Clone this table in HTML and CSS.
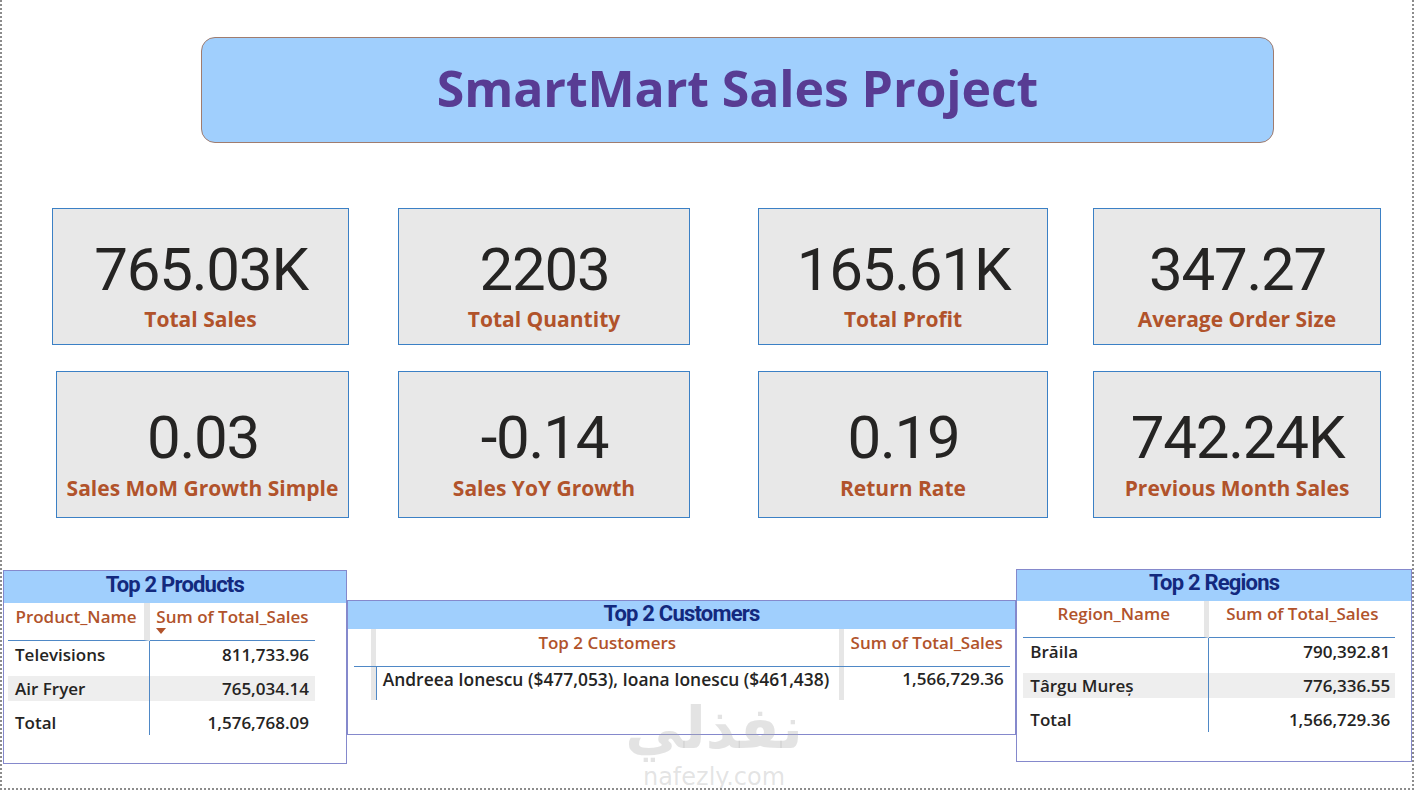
FILE: index.html
```
<!DOCTYPE html>
<html lang="en">
<head>
<meta charset="utf-8">
<title>SmartMart Sales Project</title>
<link rel="stylesheet" href="styles.css">
</head>
<body>
<div class="canvas">
  <header class="title-box">
    <h1 class="title">SmartMart Sales Project</h1>
  </header>

  <section class="kpis">
    <div class="kpi-row kpi-row--first">
      <div class="kpi kpi--a"><div class="kpi-value">765.03K</div><div class="kpi-label">Total Sales</div></div>
      <div class="kpi kpi--b"><div class="kpi-value">2203</div><div class="kpi-label">Total Quantity</div></div>
      <div class="kpi kpi--c"><div class="kpi-value">165.61K</div><div class="kpi-label">Total Profit</div></div>
      <div class="kpi kpi--d"><div class="kpi-value">347.27</div><div class="kpi-label">Average Order Size</div></div>
    </div>
    <div class="kpi-row kpi-row--second">
      <div class="kpi kpi--a"><div class="kpi-value">0.03</div><div class="kpi-label">Sales MoM Growth Simple</div></div>
      <div class="kpi kpi--b"><div class="kpi-value">-0.14</div><div class="kpi-label">Sales YoY Growth</div></div>
      <div class="kpi kpi--c"><div class="kpi-value">0.19</div><div class="kpi-label">Return Rate</div></div>
      <div class="kpi kpi--d"><div class="kpi-value">742.24K</div><div class="kpi-label">Previous Month Sales</div></div>
    </div>
  </section>

  <section class="tables">
    <div class="tbl tbl--products">
      <div class="tbl-title">Top 2 Products</div>
      <div class="grid2 grid2--products">
        <div class="th th--first">Product_Name</div>
        <div class="th th--sort">Sum of Total_Sales<span class="sort-arrow"></span></div>
        <div class="td td--first">Televisions</div>
        <div class="td td--num">811,733.96</div>
        <div class="td td--first td--alt">Air Fryer</div>
        <div class="td td--num td--alt">765,034.14</div>
        <div class="td td--first">Total</div>
        <div class="td td--num">1,576,768.09</div>
      </div>
    </div>

    <div class="tbl tbl--customers">
      <div class="tbl-title">Top 2 Customers</div>
      <div class="cust-grid">
        <div class="ch ch--empty"></div>
        <div class="ch ch--sep"></div>
        <div class="ch ch--center">Top 2 Customers</div>
        <div class="ch ch--sep"></div>
        <div class="ch ch--center">Sum of Total_Sales</div>
        <div class="cd cd--empty"></div>
        <div class="cd cd--sep"></div>
        <div class="cd cd--text">Andreea Ionescu ($477,053), Ioana Ionescu ($461,438)</div>
        <div class="cd cd--sep"></div>
        <div class="cd cd--num">1,566,729.36</div>
      </div>
    </div>

    <div class="tbl tbl--regions">
      <div class="tbl-title">Top 2 Regions</div>
      <div class="grid2 grid2--regions">
        <div class="th th--first">Region_Name</div>
        <div class="th">Sum of Total_Sales</div>
        <div class="td td--first">Brăila</div>
        <div class="td td--num">790,392.81</div>
        <div class="td td--first td--alt">Târgu Mureș</div>
        <div class="td td--num td--alt">776,336.55</div>
        <div class="td td--first">Total</div>
        <div class="td td--num">1,566,729.36</div>
      </div>
    </div>
  </section>

  <div class="watermark">
    <div class="wm-ar" lang="ar" dir="rtl">نفذلي</div>
    <div class="wm-en">nafezly.com</div>
  </div>
</div>
</body>
</html>
```

FILE: styles.css
```
* {
  box-sizing: border-box;
  margin: 0;
  padding: 0;
}

body {
  margin: 0;
  background: #ffffff;
  font-family: "Open Sans", "Liberation Sans", sans-serif;
}

.canvas {
  position: relative;
  width: 1414px;
  height: 790px;
  border: 2px dotted #8c8c8c;
  border-top: none;
  overflow: hidden;
  background: #ffffff;
}

/* ---------- Title ---------- */
.title-box {
  margin: 37px 0 0 199px;
  width: 1073px;
  height: 106px;
  background: #a0cffd;
  border: 1px solid #a07c6e;
  border-radius: 14px;
  display: flex;
  align-items: center;
  justify-content: center;
  padding-bottom: 4px;
}

.title {
  font-family: "Open Sans", sans-serif;
  font-weight: 700;
  font-size: 50px;
  line-height: 1;
  color: #583c93;
  letter-spacing: -0.1px;
}

/* ---------- KPI cards ---------- */
.kpis {
  margin-top: 65px;
}

.kpi-row {
  display: flex;
}

.kpi-row--second {
  margin-top: 26px;
}

.kpi {
  background: #e8e8e8;
  border: 1px solid #3b80c5;
  display: flex;
  flex-direction: column;
  align-items: center;
}

.kpi-row--first .kpi {
  height: 137px;
  padding-top: 31px;
}

.kpi-row--second .kpi {
  height: 147px;
  padding-top: 36px;
}

.kpi--a { margin-left: 50px; width: 297px; }
.kpi--b { margin-left: 49px; width: 292px; }
.kpi--c { margin-left: 68px; width: 290px; }
.kpi--d { margin-left: 45px; width: 288px; }

.kpi-row--second .kpi--a { margin-left: 54px; width: 293px; }

.kpi-value {
  font-family: Roboto, "Liberation Sans", sans-serif;
  font-weight: 400;
  font-size: 60px;
  line-height: 60px;
  color: #252423;
  letter-spacing: -1.2px;
  padding-left: 1px;
}

.kpi-label {
  font-family: "Open Sans", sans-serif;
  font-weight: 700;
  font-size: 21px;
  line-height: 24px;
  color: #b1532b;
  margin-top: 7px;
}

.kpi-row--second .kpi-label {
  margin-top: 8px;
}

/* ---------- Tables ---------- */
.tables {
  display: flex;
  align-items: flex-start;
}

.tbl {
  border: 1px solid #8589cc;
  background: #ffffff;
}

.tbl--products {
  margin-top: 52px;
  margin-left: 1px;
  width: 344px;
  height: 194px;
}

.tbl--customers {
  margin-top: 82px;
  width: 670px;
  height: 135px;
}

.tbl--regions {
  margin-top: 51px;
  width: 396px;
  height: 193px;
}

.tbl-title {
  background: #a0cffd;
  text-align: center;
  font-family: Roboto, "Liberation Sans", sans-serif;
  font-weight: 700;
  font-size: 22px;
  letter-spacing: -0.8px;
  color: #13297e;
}

.tbl--products .tbl-title {
  line-height: 27px;
  padding-bottom: 5px;
}

.tbl--customers .tbl-title {
  line-height: 25px;
  padding-bottom: 3px;
}

.tbl--regions .tbl-title {
  line-height: 25px;
  padding-bottom: 6px;
}

/* two-column tables (products / regions) */
.grid2 {
  display: grid;
  background: linear-gradient(#4f88c6, #4f88c6) no-repeat;
}

.grid2--products {
  margin-left: 4px;
  width: 307px;
  grid-template-columns: 142px 165px;
  grid-template-rows: 38px 26px 34px 34px;
  background-position: 141px 38px;
  background-size: 1px 94px;
}

.grid2--regions {
  margin-left: 6px;
  width: 372px;
  grid-template-columns: 186px 186px;
  grid-template-rows: 37px 26px 34px 34px;
  background-position: 185px 37px;
  background-size: 1px 94px;
}

.grid2 .td {
  margin-top: 9px;
}

.grid2 .td:nth-child(3),
.grid2 .td:nth-child(4) {
  margin-top: 1px;
}

.th {
  font-family: "Open Sans", sans-serif;
  font-weight: 600;
  font-size: 17px;
  line-height: 24px;
  color: #b1532b;
  text-align: center;
  white-space: nowrap;
  padding-top: 2px;
  border-bottom: 1px solid #4f88c6;
}

.grid2--regions .th {
  padding-top: 1px;
}

.th--first {
  border-right: 6px solid #e6e6e6;
}

.grid2--regions .th--first {
  border-right-width: 5px;
}

.th--sort {
  display: flex;
  flex-direction: column;
  align-items: center;
}

.sort-arrow {
  align-self: flex-start;
  margin-left: 6px;
  margin-top: -1px;
  width: 0;
  height: 0;
  border-left: 5.5px solid transparent;
  border-right: 5.5px solid transparent;
  border-top: 6px solid #b1532b;
}

.td {
  font-family: "Open Sans", sans-serif;
  font-weight: 600;
  font-size: 17px;
  line-height: 25px;
  height: 25px;
  color: #252423;
  white-space: nowrap;
}

.td--first {
  padding-left: 7px;
  border-right: 1px solid #4f88c6;
}

.td--num {
  text-align: right;
  padding-right: 6px;
}

.grid2--regions .td--num {
  padding-right: 5px;
}

.td--alt {
  background: #eeeeee;
}

/* customers table */
.cust-grid {
  margin-left: 6px;
  width: 656px;
  display: grid;
  grid-template-columns: 17px 5px 463px 5px 166px;
  grid-template-rows: 38px 33px;
}

.ch {
  font-family: "Open Sans", sans-serif;
  font-weight: 600;
  font-size: 17px;
  line-height: 24px;
  color: #b1532b;
  padding-top: 2px;
  white-space: nowrap;
  border-bottom: 1px solid #4f88c6;
}

.ch--center {
  text-align: center;
}

.ch--sep,
.cd--sep {
  background: #e6e6e6;
}

.cd {
  font-family: "Open Sans", sans-serif;
  font-weight: 600;
  font-size: 17px;
  line-height: 24px;
  color: #252423;
  white-space: nowrap;
}

.cd--text {
  border-left: 1px solid #4f88c6;
  padding-left: 6px;
  font-size: 17.4px;
}

.cd--num {
  text-align: right;
  padding-right: 6px;
}

/* ---------- Watermark overlay ---------- */
.watermark {
  position: absolute;
  left: 612px;
  top: 694px;
  width: 200px;
  display: flex;
  flex-direction: column;
  align-items: center;
  color: rgba(170, 170, 170, 0.33);
  pointer-events: none;
}

.wm-ar {
  font-family: "DejaVu Sans", sans-serif;
  font-weight: 700;
  font-size: 58px;
  line-height: 68px;
  height: 72px;
  overflow: hidden;
}

.wm-en {
  font-family: "DejaVu Sans", sans-serif;
  font-size: 24px;
  line-height: 22px;
}
```
